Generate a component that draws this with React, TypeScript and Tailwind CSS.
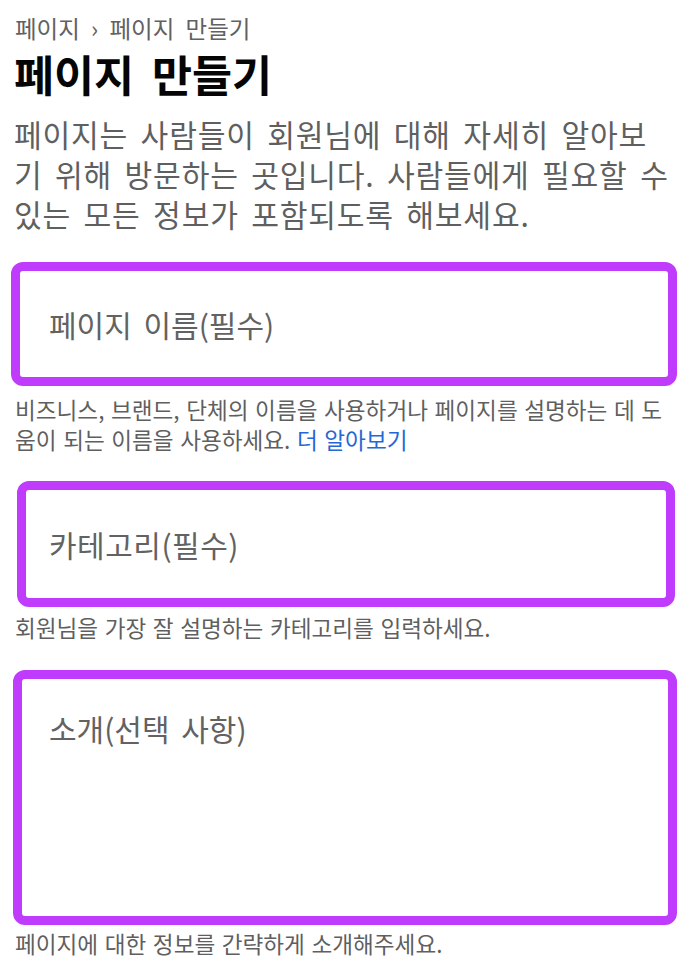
import React from "react";

const font = { fontFamily: '"Noto Sans CJK KR", "Noto Sans", sans-serif' };

export default function App() {
  return (
    <div
      className="w-[690px] h-[978px] bg-white overflow-hidden flex flex-col"
      style={font}
    >
      <div className="mt-[13px] ml-[15px] text-[23.5px] leading-[30px] text-[#616161] [word-spacing:6px]">
        페이지 › 페이지 만들기
      </div>
      <h1 className="mt-[5px] ml-[14px] text-[43.5px] leading-[52px] font-bold text-[#050505] [word-spacing:8px]">
        페이지 만들기
      </h1>
      <p className="mt-[14px] ml-[14px] text-[30.2px] leading-[40px] text-[#5f5f5f] tracking-[0.75px] [word-spacing:5px]">
        <span className="block whitespace-nowrap">
          페이지는 사람들이 회원님에 대해 자세히 알아보
        </span>
        <span className="block whitespace-nowrap">
          기 위해 방문하는 곳입니다. 사람들에게 필요할 수
        </span>
        <span className="block whitespace-nowrap">
          있는 모든 정보가 포함되도록 해보세요.
        </span>
      </p>

      <div className="mt-[28px] ml-[11px] w-[666px] h-[124px] border-[9px] border-[#c03cfc] rounded-[12px] flex items-center pl-[29px]">
        <span className="text-[30px] leading-[40px] text-[#626262] [word-spacing:5px]">
          페이지 이름(필수)
        </span>
      </div>
      <p className="mt-[9px] ml-[15px] text-[22.6px] leading-[30px] text-[#5f5f5f] [word-spacing:1.5px]">
        <span className="block whitespace-nowrap">
          비즈니스, 브랜드, 단체의 이름을 사용하거나 페이지를 설명하는 데 도
        </span>
        <span className="block whitespace-nowrap">
          움이 되는 이름을 사용하세요.{" "}
          <span className="text-[#2467d6]">더 알아보기</span>
        </span>
      </p>

      <div className="mt-[26px] ml-[17px] w-[658px] h-[126px] border-[9px] border-[#c03cfc] rounded-[12px] flex items-center pl-[23px]">
        <span className="text-[30px] leading-[40px] text-[#626262] tracking-[0.5px] [word-spacing:5px]">
          카테고리(필수)
        </span>
      </div>
      <p className="mt-[6px] ml-[15px] text-[22.6px] leading-[30px] text-[#5f5f5f] [word-spacing:1.5px] whitespace-nowrap">
        회원님을 가장 잘 설명하는 카테고리를 입력하세요.
      </p>

      <div className="mt-[27px] ml-[13px] w-[664px] h-[255px] border-[9px] border-[#c03cfc] rounded-[12px] pt-[29px] pl-[27px]">
        <span className="block text-[30px] leading-[40px] text-[#626262] [word-spacing:5px]">
          소개(선택 사항)
        </span>
      </div>
      <p className="mt-[4px] ml-[15px] text-[22.6px] leading-[30px] text-[#5f5f5f] [word-spacing:1.5px] whitespace-nowrap">
        페이지에 대한 정보를 간략하게 소개해주세요.
      </p>
    </div>
  );
}
